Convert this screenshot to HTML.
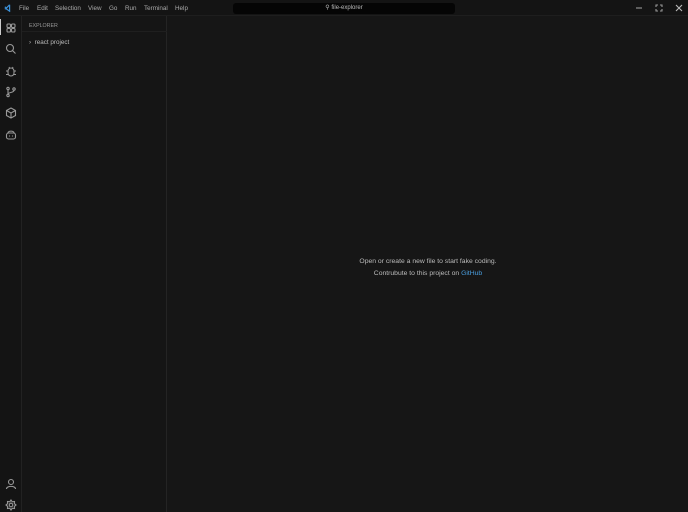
<!DOCTYPE html>
<html><head><meta charset="utf-8"><style>
*{margin:0;padding:0;box-sizing:border-box}
body{width:688px;height:512px;background:#161616;font-family:"Liberation Sans",sans-serif;color:#ccc;overflow:hidden;position:relative}
.title{position:absolute;left:0;top:0;width:688px;height:16px;background:#141414;border-bottom:1px solid #1e1e1e}
.menu{position:absolute;top:5px;font-size:6.3px;color:#aaa}
.search{position:absolute;left:233px;top:3px;width:222px;height:11px;background:#050505;border-radius:3px;font-size:6px;color:#bbb;text-align:center;line-height:11px}
.act{position:absolute;left:0;top:16px;width:22px;height:496px;background:#141414;border-right:1px solid #222}
.side{position:absolute;left:22px;top:16px;width:145px;height:496px;background:#151515;border-right:1px solid #242424}
.ic{position:absolute;left:5px;width:12px;height:12px}
svg{stroke:#999;fill:none;stroke-width:1.1}
.msg{position:absolute;left:168px;width:520px;text-align:center;font-size:6.8px;color:#bbb}
</style></head><body>
<div class="title">
<svg style="position:absolute;left:4px;top:4px;width:8px;height:8px" viewBox="0 0 10 10"><path d="M7 1L7 9L2 5.5M7 1L2 6M1 3.5L3 5L1 6.5" stroke="#3b8fd6" stroke-width="1.5"/></svg>
<span class="menu" style="left:19px">File</span>
<span class="menu" style="left:37px">Edit</span>
<span class="menu" style="left:55px">Selection</span>
<span class="menu" style="left:88px">View</span>
<span class="menu" style="left:109px">Go</span>
<span class="menu" style="left:125px">Run</span>
<span class="menu" style="left:144px">Terminal</span>
<span class="menu" style="left:175px">Help</span>
<div class="search">&#9906; file-explorer</div>
<svg style="position:absolute;left:635px;top:5px;width:8px;height:6px"><path d="M1 3H7"/></svg>
<svg style="position:absolute;left:655px;top:4px;width:8px;height:8px"><path d="M1 3V1H3M5 1H7V3M7 5V7H5M3 7H1V5"/></svg>
<svg style="position:absolute;left:675px;top:4px;width:8px;height:8px"><path d="M1 1L7 7M7 1L1 7" stroke="#bbb"/></svg>
</div>
<div class="act">
<div style="position:absolute;left:0;top:3px;width:1px;height:16px;background:#ccc"></div>
<svg class="ic" style="top:6px" viewBox="0 0 12 12"><rect x="2" y="2" width="3.5" height="3.5" rx="1"/><rect x="6.5" y="2" width="3.5" height="3.5" rx="1"/><rect x="2" y="6.5" width="3.5" height="3.5" rx="1"/><rect x="6.5" y="6.5" width="3.5" height="3.5" rx="1"/></svg>
<svg class="ic" style="top:27px" viewBox="0 0 12 12"><circle cx="5" cy="5" r="3.5"/><path d="M7.5 7.5L10.5 10.5"/></svg>
<svg class="ic" style="top:49px" viewBox="0 0 12 12"><rect x="3" y="3" width="6" height="8" rx="3"/><path d="M1 6H3M9 6H11M1 9.5H3M9 9.5H11M4 2L4.5 3M8 2L7.5 3"/></svg>
<svg class="ic" style="top:70px" viewBox="0 0 12 12"><circle cx="3" cy="2.5" r="1.2"/><circle cx="3" cy="9.5" r="1.2"/><circle cx="9" cy="3" r="1.2"/><path d="M3 3.7V8.3M9 4.2C9 7 3 6 3 8.3"/></svg>
<svg class="ic" style="top:91px" viewBox="0 0 12 12"><path d="M6 1L10.5 3.5V8.5L6 11L1.5 8.5V3.5ZM1.5 3.5L6 6L10.5 3.5M6 6V11"/></svg>
<svg class="ic" style="top:113px" viewBox="0 0 12 12"><rect x="1.5" y="4" width="9" height="6" rx="2"/><path d="M3 4C3 1.5 9 1.5 9 4M4.5 6.5V7.5M7.5 6.5V7.5"/></svg>
<svg class="ic" style="top:462px" viewBox="0 0 12 12"><circle cx="6" cy="4" r="2.5"/><path d="M1.5 11C1.5 7.5 10.5 7.5 10.5 11"/></svg>
<svg class="ic" style="top:483px" viewBox="0 0 12 12"><circle cx="6" cy="6" r="1.8"/><path d="M6 1L7.2 2.8L9.5 2.5L9.3 4.6L11 6L9.3 7.4L9.5 9.5L7.2 9.2L6 11L4.8 9.2L2.5 9.5L2.7 7.4L1 6L2.7 4.6L2.5 2.5L4.8 2.8Z"/></svg>
</div>
<div class="side">
<div style="position:absolute;left:7px;top:7px;font-size:5.3px;color:#999">EXPLORER</div>
<div style="position:absolute;left:0;top:15px;width:145px;height:1px;background:#1f1f1f"></div>
<div style="position:absolute;left:7px;top:23px;font-size:6.3px;color:#bbb">&#8250;&nbsp; react project</div>
</div>
<div class="msg" style="top:258px">Open or create a new file to start fake coding.</div>
<div class="msg" style="top:270px">Contrubute to this project on <span style="color:#4a9fe0">GitHub</span></div>
</body></html>
